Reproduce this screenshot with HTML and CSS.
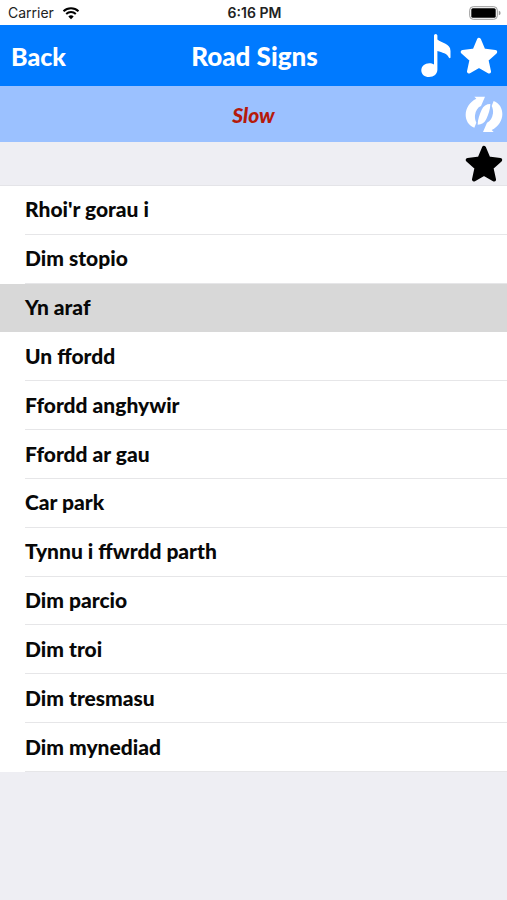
FILE: index.html
```html
<!DOCTYPE html>
<html lang="cy">
<head>
<meta charset="utf-8">
<meta name="viewport" content="width=device-width, initial-scale=1">
<title>Road Signs</title>
<link rel="stylesheet" href="styles.css">
</head>
<body>
<div class="status">
  <div class="carrier">
    <span>Carrier</span>
    <svg class="wifi" viewBox="0 0 18 14" aria-hidden="true">
      <path d="M1.500 5.200a10.800 10.800 0 0 1 15 0M4.200 8a7 7 0 0 1 9.600 0"/>
      <path class="dot" d="M9 13.200 6.300 10.500a3.900 3.900 0 0 1 5.400 0z"/>
    </svg>
  </div>
  <span class="clock">6:16 PM</span>
  <svg class="battery" viewBox="0 0 32 14" aria-hidden="true">
    <rect class="shell" x="0.7" y="0.7" width="27.6" height="12.6" rx="3.5"/>
    <rect x="2.3" y="2.3" width="24.4" height="9.4" rx="1.5"/>
    <path class="tip" d="M29.800 4.800q1.800.5 1.800 2.200t-1.800 2.200z"/>
  </svg>
</div>
<header class="nav">
  <button class="back" type="button">Back</button>
  <h1 class="title">Road Signs</h1>
  <div class="actions">
    <button class="icon-button note" type="button" aria-label="Play sound">
      <svg viewBox="0 0 30 43"><path d="M13 1.500Q13 0 14.700 0T16.400 1.500V5.500C20.500 9.500 29.500 9 29.500 17V23.500Q29 25 27.800 23.500C26.500 19.500 21 18.500 16.400 17V35.500C16.400 40 13 43 8 43 3.500 43 .3 40.300.3 36.500.3 32.300 3.800 29.300 8.300 29.300 10 29.300 11.700 29.700 13 30.500z"/></svg>
    </button>
    <button class="icon-button" type="button" aria-label="Favourites">
      <svg viewBox="0 0 38 38"><path d="M19 2.800 23.500 13.600 35.200 14.900 26.500 22.800 29 34.500 19 28.800 9 34.500 11.500 22.800 2.800 14.900 14.500 13.600z"/></svg>
    </button>
  </div>
</header>
<section class="prompt">
  <p class="word">Slow</p>
  <button class="icon-button" type="button" aria-label="Refresh">
    <svg class="solid" viewBox="6 3 114 114">
      <path d="M34 8H66L54 36C44 40 38 50 36 64 35 72 37 80 40 86L34 101C16 94 8 78 8 62 8 42 20 24 40 14z"/>
      <path d="M92 114H60L72 86C82 82 88 72 90 58 91 50 89 42 86 36L92 21C110 28 118 44 118 60 118 80 106 98 86 108z"/>
      <path d="M82 30C70 30 61 36 56 47 50 60 44 76 44 92 56 92 65 86 70 75 76 62 82 46 82 30z"/>
    </svg>
  </button>
</section>
<section class="rating">
  <button class="icon-button dark" type="button" aria-label="Add to favourites">
    <svg viewBox="0 0 38 38"><path d="M19 2.800 23.500 13.600 35.200 14.900 26.500 22.800 29 34.500 19 28.800 9 34.500 11.500 22.800 2.800 14.900 14.500 13.600z"/></svg>
  </button>
</section>
<main>
  <ul class="list">
    <li><button class="row" type="button">Rhoi'r gorau i</button></li>
    <li><button class="row" type="button">Dim stopio</button></li>
    <li class="selected"><button class="row" type="button">Yn araf</button></li>
    <li><button class="row" type="button">Un ffordd</button></li>
    <li><button class="row" type="button">Ffordd anghywir</button></li>
    <li><button class="row" type="button">Ffordd ar gau</button></li>
    <li><button class="row" type="button">Car park</button></li>
    <li><button class="row" type="button">Tynnu i ffwrdd parth</button></li>
    <li><button class="row" type="button">Dim parcio</button></li>
    <li><button class="row" type="button">Dim troi</button></li>
    <li><button class="row" type="button">Dim tresmasu</button></li>
    <li><button class="row" type="button">Dim mynediad</button></li>
  </ul>
</main>
</body>
</html>
```
FILE: styles.css
```css
* {
  box-sizing: border-box;
}

body {
  margin: 0;
  min-height: 100vh;
  background: #eeeef3;
  color: #080808;
  font-family: Lato, sans-serif;
  font-weight: 900;
}

button {
  margin: 0;
  padding: 0;
  border: 0;
  background: none;
  color: inherit;
  font: inherit;
  cursor: pointer;
}

.status {
  display: grid;
  grid-template-columns: 1fr auto 1fr;
  align-items: center;
  height: 25px;
  padding: 0 6px 0 8px;
  background: #fff;
  color: #222;
  font-family: Inter, sans-serif;
  font-size: 14px;
  font-weight: 400;
}

.carrier {
  display: flex;
  align-items: center;
  gap: 8px;
}

.clock {
  font-weight: 600;
}

.wifi {
  width: 18px;
  height: 14px;
  fill: none;
  stroke: #000;
  stroke-width: 2;
}

.wifi .dot {
  fill: #000;
  stroke: none;
}

.battery {
  justify-self: end;
  width: 32px;
  height: 14px;
}

.battery .shell {
  fill: #fff;
  stroke: #999;
}

.battery .tip {
  fill: #999;
}

.nav {
  display: grid;
  grid-template-columns: 1fr auto 1fr;
  align-items: center;
  height: 61px;
  padding: 0 9px 0 11px;
  background: #007aff;
  color: #fff;
  font-size: 25px;
}

.back {
  justify-self: start;
}

.title {
  margin: 0;
  font-size: 26px;
  font-weight: 900;
}

.actions {
  display: flex;
  justify-content: flex-end;
  align-items: center;
  gap: 9px;
}

.icon-button {
  display: block;
  width: 38px;
  height: 38px;
}

.icon-button svg {
  display: block;
  width: 100%;
  height: 100%;
  fill: currentColor;
  stroke: currentColor;
  stroke-width: 4;
  stroke-linejoin: round;
}

.note {
  width: 30px;
  height: 43px;
}

.note svg,
.icon-button .solid {
  stroke: none;
}

.prompt,
.rating {
  display: grid;
  grid-template-columns: 1fr auto 1fr;
  align-items: center;
  padding: 0 4px;
}

.prompt {
  height: 56px;
  background: #9bc1ff;
  color: #fff;
}

.word {
  grid-column: 2;
  margin: 0;
  color: #b51a0c;
  font-size: 21px;
  font-style: italic;
}

.prompt .icon-button,
.rating .icon-button {
  grid-column: 3;
  justify-self: end;
}

.rating {
  height: 43px;
}

.dark {
  color: #000;
}

.list {
  display: grid;
  grid-auto-rows: 1fr;
  min-height: 587px;
  margin: 0;
  padding: 0;
  border-top: 1px solid #e4e4e8;
  background: #fff;
  list-style: none;
}

.list li {
  display: grid;
  padding-left: 25px;
}

.row {
  padding-bottom: 2px;
  border-bottom: 1px solid #e6e6e8;
  font-size: 21px;
  text-align: left;
}

.list .selected {
  background: #d8d8d8;
}

.selected .row {
  border-color: #d8d8d8;
}
```
